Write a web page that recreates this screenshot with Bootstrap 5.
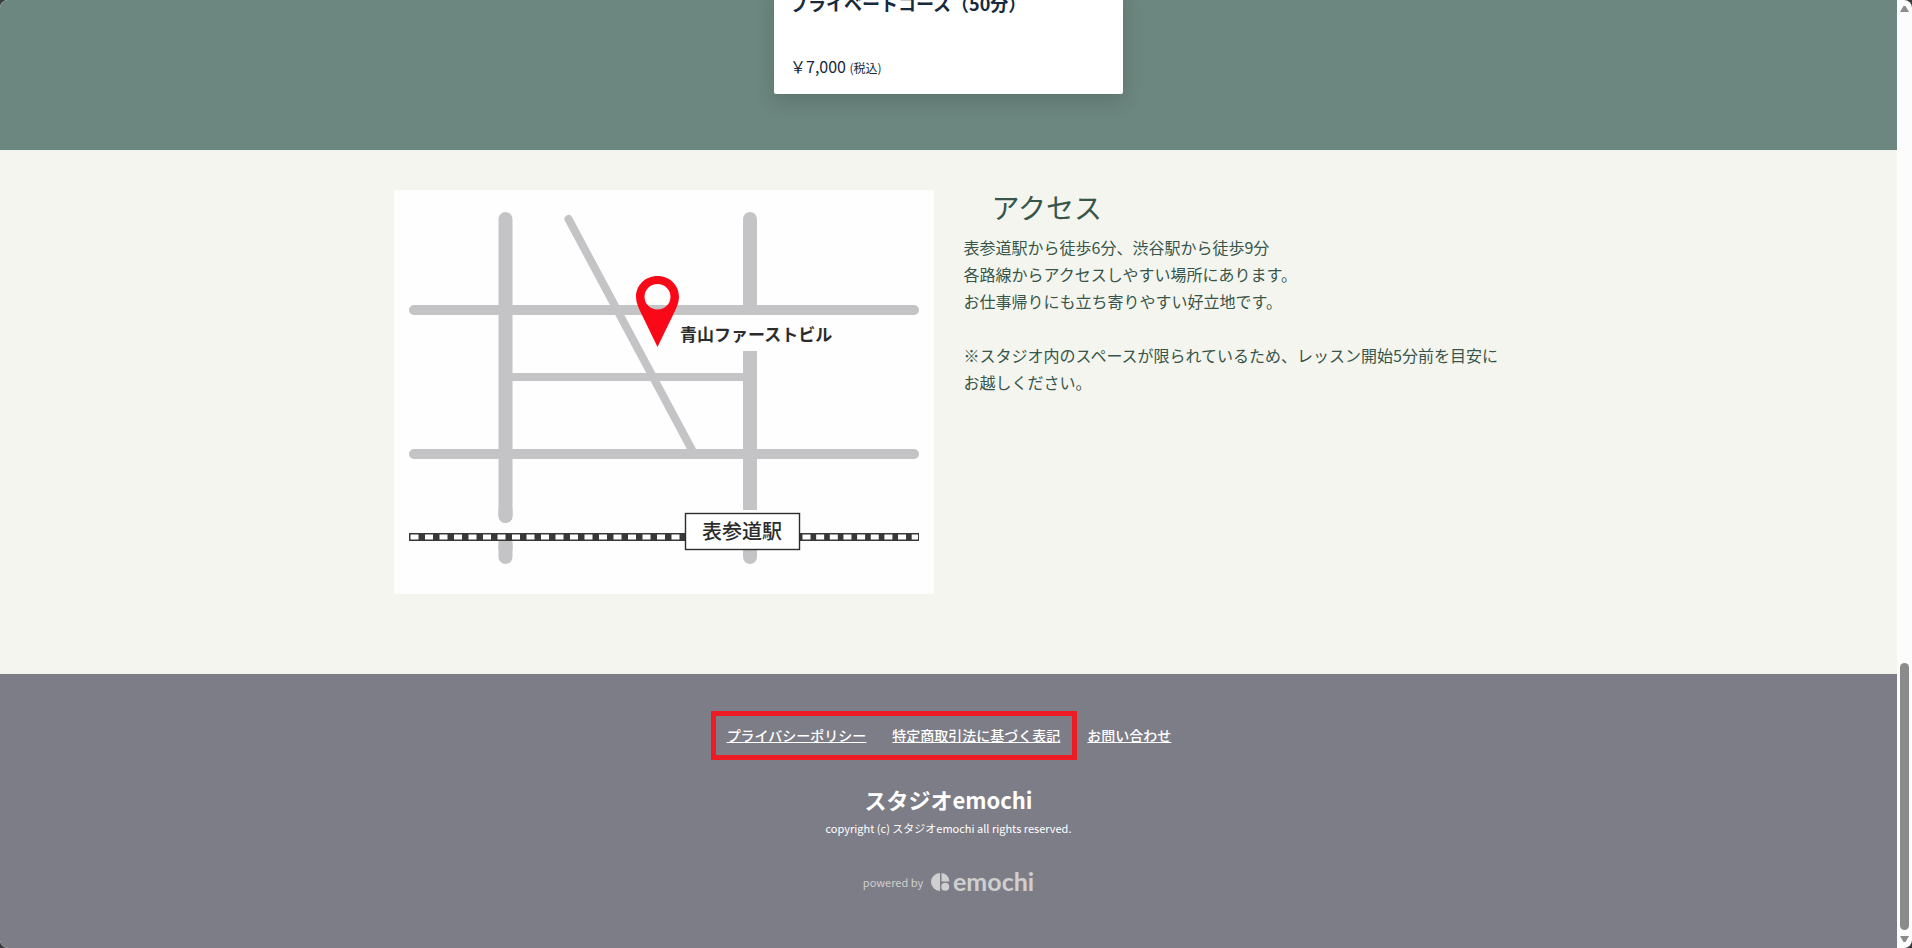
<!DOCTYPE html>
<html lang="ja">
<head>
<meta charset="utf-8">
<meta name="viewport" content="width=device-width, initial-scale=1">
<title>スタジオemochi</title>
<link rel="stylesheet" href="https://cdn.jsdelivr.net/npm/bootstrap@5.3.0/dist/css/bootstrap.min.css">
<style>
  html { background: #3a3a3c; }
  body { font-family: "Noto Sans CJK JP", sans-serif; background: #3a3a3c; }
  .window-frame { border-radius: 8px; background: #fcfcfc; height: 100vh; }

  .course-section { background: #6c877f; padding-bottom: 56px; }
  .course-card { width: 349px; margin-top: -12px; padding: 0 16px 14px; border: 0; border-radius: 2px; color: #17293d; box-shadow: 0 6px 20px rgba(0, 0, 0, .16); }
  .course-title { font-size: 18px; line-height: 30px; font-weight: 700; margin-bottom: 36px; }
  .course-price { font-size: 16px; line-height: 24px; }
  .course-tax { font-size: 12px; }

  .access-section { background: #f4f5ee; color: #37554b; padding: 40px 0 80px; }
  .access-wrap { max-width: 1140px; padding: 0 15px; }
  .access-row { --bs-gutter-x: 30px; }
  .access-title { font-size: 28px; line-height: 34px; font-weight: 400; margin: 0 0 10px; padding-left: 28px; }
  .access-text { font-size: 16px; line-height: 27px; }

  .site-footer { background: #7d7d87; padding-top: 37px; }
  .footer-links { padding-right: 15px; gap: 10px; font-size: 14px; line-height: 23px; font-weight: 500; }
  .footer-links a { color: #fff; text-decoration: underline; }
  .marked-links { gap: 26px; border: 5px solid #ed1c24; padding: 8px 12px 8px 11px; }
  .footer-name { font-size: 22px; line-height: 32px; font-weight: 700; margin: 23px 0 0; }
  .footer-copy { font-size: 11px; line-height: 20px; margin-top: 3px; }
  .footer-powered { font-size: 11px; line-height: 20px; color: #cfcfcf; margin-top: 34px; gap: 8px; }

  .scroll-rail { flex: 0 0 15px; padding: 6px 3px; }
  .scroll-arrow { width: 9px; height: 6px; flex: none; }
  .scroll-thumb { flex: 267 0 0; width: 9px; background: #8b8b8b; border-radius: 5px; margin-bottom: 6px; }
  .scroll-space { flex: 651 0 0; }
</style>
</head>
<body class="overflow-hidden">
<div class="window-frame d-flex overflow-hidden">
  <div class="flex-grow-1 d-flex flex-column overflow-hidden">

    <section class="course-section d-flex justify-content-center">
      <article class="course-card card">
        <h3 class="course-title">プライベートコース（50分）</h3>
        <div class="course-price">￥7,000 <span class="course-tax">(税込)</span></div>
      </article>
    </section>

    <section class="access-section">
      <div class="container access-wrap">
        <div class="row access-row">
          <div class="col-md-6">
            <svg class="d-block w-100" viewBox="0 0 540 404" role="img" aria-label="アクセスマップ">
              <rect width="540" height="404" fill="#fefefe"/>
              <g stroke="#c4c4c6" fill="none">
                <g stroke-linecap="round">
                  <path stroke-width="14" d="M111.500 29V326M356 29V120M111.500 355V367M356 340V367"/>
                  <path stroke-width="10" d="M20 120H520M20 264H520"/>
                  <path stroke-width="8" d="M174.500 29L298 260"/>
                </g>
                <path stroke-width="14" d="M111.500 351V360M356 161V320"/>
                <path stroke-width="8" d="M112 187H356"/>
              </g>
              <path d="M98 335H125V351H98Z" fill="#fefefe"/>
              <path stroke="#c4c4c6" stroke-width="14" stroke-linecap="round" d="M111.500 320V326"/>
              <path d="M340 320H372V325H340Z M340 125H372V161H340Z" fill="#fefefe"/>
              <rect x="15" y="343" width="510" height="8" fill="#383838"/>
              <path d="M16.500 347H291" stroke="#fff" stroke-width="5" stroke-dasharray="8 6.500"/>
              <path d="M408.500 347H524" stroke="#fff" stroke-width="5" stroke-dasharray="8 5.650"/>
              <rect x="291.500" y="323.500" width="114" height="36" fill="#fff" stroke="#2c2c2c" stroke-width="1.400"/>
              <text x="308" y="349" font-size="20" font-weight="500" fill="#2c2c2c">表参道駅</text>
              <path fill="#f90818" fill-rule="evenodd" d="M263.500 86C251 86 242 95.500 242 107C242 113 245 119 248 125L263.500 157L279 125C282 119 285 113 285 107C285 95.500 276 86 263.500 86ZM263.500 94A13 12.800 0 1 1 263.500 119.600A13 12.800 0 1 1 263.500 94Z"/>
              <text x="286" y="151" font-size="17" font-weight="700" fill="#2c2c2c">青山ファーストビル</text>
            </svg>
          </div>
          <div class="col-md-6">
            <h2 class="access-title">アクセス</h2>
            <p class="access-text mb-0">表参道駅から徒歩6分、渋谷駅から徒歩9分<br>各路線からアクセスしやすい場所にあります。<br>お仕事帰りにも立ち寄りやすい好立地です。<br><br>※スタジオ内のスペースが限られているため、レッスン開始5分前を目安にお越しください。</p>
          </div>
        </div>
      </div>
    </section>

    <footer class="site-footer flex-grow-1 text-white text-center">
      <nav class="footer-links d-flex justify-content-center align-items-center" aria-label="フッター">
        <div class="marked-links d-flex">
          <a href="#privacy">プライバシーポリシー</a>
          <a href="#law">特定商取引法に基づく表記</a>
        </div>
        <a href="#contact">お問い合わせ</a>
      </nav>
      <p class="footer-name">スタジオemochi</p>
      <p class="footer-copy mb-0">copyright (c) スタジオemochi all rights reserved.</p>
      <div class="footer-powered d-flex justify-content-center align-items-center">
        <span>powered by</span>
        <svg width="103" height="20" viewBox="0 0 103 20" fill="#cfcfcf" role="img" aria-label="emochi">
          <path d="M9 1A9 9 0 0 0 9 19ZM10.500 1A8.500 8.500 0 0 1 18.500 9.500H10.500Z"/>
          <circle cx="14.200" cy="14.800" r="4"/>
          <text x="22" y="18.500" font-family="Lato, sans-serif" font-weight="700" font-size="25">emochi</text>
        </svg>
      </div>
    </footer>
  </div>

  <div class="scroll-rail d-flex flex-column" aria-hidden="true">
    <svg class="scroll-arrow" viewBox="0 0 9 6"><path d="M3.500 0H5.500L9 6H0Z" fill="#8b8b8b"/></svg>
    <div class="scroll-space"></div>
    <div class="scroll-thumb"></div>
    <svg class="scroll-arrow" viewBox="0 0 9 6"><path d="M0 0H9L5.500 6H3.500Z" fill="#8b8b8b"/></svg>
  </div>
</div>
<script src="https://cdn.jsdelivr.net/npm/bootstrap@5.3.0/dist/js/bootstrap.bundle.min.js"></script>
</body>
</html>
